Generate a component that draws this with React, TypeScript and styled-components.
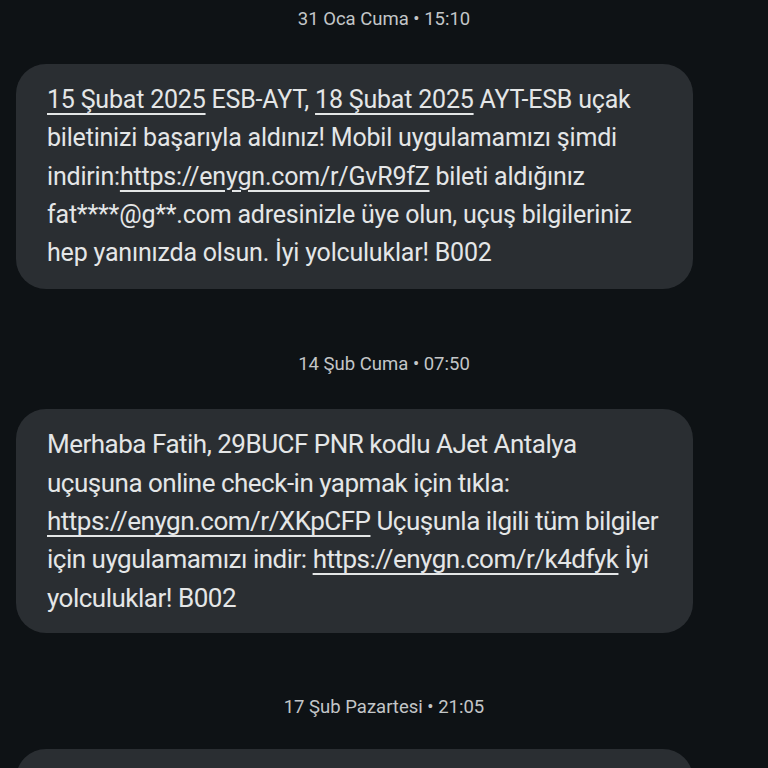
import * as React from 'react'
import styled, { createGlobalStyle } from 'styled-components'

const GlobalStyle = createGlobalStyle`
  html, body {
    margin: 0;
    padding: 0;
    background: #0e1215;
  }
  body {
    font-family: Roboto, 'Noto Sans', sans-serif;
    color: #e4e6e7;
  }
`

const Thread = styled.div`
  display: flex;
  flex-direction: column;
  width: 768px;
  height: 768px;
  overflow: hidden;
  background: #0e1215;
`

const PrevEdge = styled.div`
  height: 3px;
  margin: 0 33px 0 32px;
  background: #1b1f22;
  border-radius: 0 0 3px 3px;
`

const DateLabel = styled.div<{ $top: number }>`
  margin-top: ${p => p.$top}px;
  height: 22px;
  text-align: center;
  font-size: 18.5px;
  line-height: 22px;
  color: #c3c6c8;
  letter-spacing: 0;
`

const Bubble = styled.div<{ $narrow?: boolean; $top?: number }>`
  margin: ${p => p.$top ?? 34}px 75px 0 16px;
  padding: ${p => (p.$narrow ? '16px 31px 16px' : '17px 31px 17px')};
  background: #2a2e32;
  border-radius: 30px;
  font-size: ${p => (p.$narrow ? '26px' : '25px')};
  line-height: 38.3px;
  letter-spacing: ${p => (p.$narrow ? '-0.5px' : '-0.2px')};
  white-space: ${p => (p.$narrow ? 'nowrap' : 'normal')};
`

const Link = styled.span`
  text-decoration: underline;
  text-decoration-thickness: 1.5px;
  text-underline-offset: 5px;
`

export default function App() {
  return (
    <>
      <GlobalStyle />
      <Thread>
        <PrevEdge />
        <DateLabel $top={8}>31 Oca Cuma • 15:10</DateLabel>
        <Bubble>
          <Link>15 Şubat 2025</Link> ESB-AYT, <Link>18 Şubat 2025</Link> AYT-ESB uçak biletinizi
          başarıyla aldınız! Mobil uygulamamızı şimdi indirin:
          <Link>https://enygn.com/r/GvR9fZ</Link> bileti aldığınız fat****@g**.com adresinizle üye
          olun, uçuş bilgileriniz hep yanınızda olsun. İyi yolculuklar! B002
        </Bubble>
        <DateLabel $top={64}>14 Şub Cuma • 07:50</DateLabel>
        <Bubble $narrow>
          Merhaba Fatih, 29BUCF PNR kodlu AJet Antalya
          <br />
          uçuşuna online check-in yapmak için tıkla:
          <br />
          <Link>https://enygn.com/r/XKpCFP</Link> Uçuşunla ilgili tüm bilgiler
          <br />
          için uygulamamızı indir: <Link>https://enygn.com/r/k4dfyk</Link> İyi
          <br />
          yolculuklar! B002
        </Bubble>
        <DateLabel $top={63}>17 Şub Pazartesi • 21:05</DateLabel>
        <Bubble $top={31}>&nbsp;</Bubble>
      </Thread>
    </>
  )
}
